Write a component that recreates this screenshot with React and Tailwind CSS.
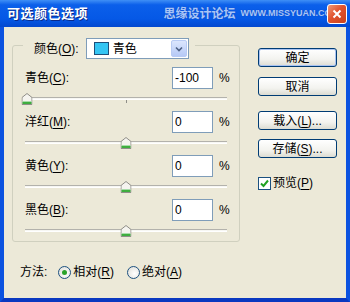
import React from 'react';

const channels = [
  { name: '青色', key: 'C', value: -100 },
  { name: '洋红', key: 'M', value: 0 },
  { name: '黄色', key: 'Y', value: 0 },
  { name: '黑色', key: 'B', value: 0 },
];

const U = ({ children }) => <span className="underline underline-offset-[2px]">{children}</span>;

const Thumb = () => (
  <svg width="11" height="12" viewBox="0 0 11 12">
    <path d="M0.5 11.5V4.5L5.5 0.5L10.5 4.5V11.5Z" fill="#f5f4ef" stroke="#8f8e88" />
    <rect x="1" y="9" width="9" height="2" fill="#3fae3f" />
    <rect x="1" y="8" width="9" height="1" fill="#a8dca8" />
  </svg>
);

const Slider = ({ value }) => {
  const pct = (value + 100) / 200;
  return (
    <div className="relative h-[18px] flex items-center">
      <div className="w-full h-[3px] border-t border-[#b3b2ac] bg-[#f7f7f3] border-b border-b-white" />
      <div className="absolute left-1/2 top-[11px] w-px h-[3px] bg-[#8f8e88]" />
      <div className="absolute inset-y-0 left-[2px] right-[2px]">
        <div
          className="absolute top-[4px] -translate-x-1/2"
          style={{ left: `${pct * 100}%` }}
        >
          <Thumb />
        </div>
      </div>
    </div>
  );
};

const XPButton = ({ children, primary, className = '' }) => (
  <button
    className={`w-[79px] h-[19px] rounded-[3px] border border-[#003c74] bg-[linear-gradient(to_bottom,#ffffff,#f3f3ef_60%,#dcdcd2)] text-[12px] leading-none text-black flex items-center justify-center ${
      primary ? 'shadow-[inset_0_0_0_1px_#a9c3f2]' : ''
    } ${className}`}
  >
    {children}
  </button>
);

const Radio = ({ checked }) => (
  <span className="w-[13px] h-[13px] rounded-full border border-[#1c5180] bg-[radial-gradient(circle_at_60%_60%,#ffffff,#dcdcd6)] flex items-center justify-center">
    {checked && <span className="w-[5px] h-[5px] rounded-full bg-[#2aa32a]" />}
  </span>
);

export default function App() {
  return (
    <div className="w-[350px] h-[302px] flex flex-col font-['Liberation_Sans','Noto_Sans_CJK_SC',sans-serif] text-[12px] text-black select-none">
      {/* title bar */}
      <div className="h-[27px] flex items-center bg-[linear-gradient(to_bottom,#3f8ff6,#0b5fea_18%,#0558e6_70%,#0348cf)]">
        <span className="pl-[7px] text-[13px] font-bold text-white tracking-[0.5px] [text-shadow:1px_1px_0_#0a2a8a]">
          可选颜色选项
        </span>
        <span className="ml-auto text-[12px] font-bold text-[#a8c6f7] [text-shadow:0_0_1px_#1a44b8]">
          思缘设计论坛
        </span>
        <span className="ml-[5px] text-[9px] font-bold text-[#a8c6f7] [text-shadow:0_0_1px_#1a44b8]">
          WWW.MISSYUAN.COM
        </span>
        <span className="relative -ml-[12px] mr-[3px] w-[20px] h-[20px] rounded-[3px] border border-white bg-[linear-gradient(135deg,#f09a78,#e1532e_45%,#c8411c)] flex items-center justify-center">
          <svg width="10" height="10" viewBox="0 0 10 10">
            <path d="M1.5 1.5L8.5 8.5M8.5 1.5L1.5 8.5" stroke="white" strokeWidth="2" />
          </svg>
        </span>
      </div>

      {/* body */}
      <div className="flex-1 flex bg-[#ece9d8] border-l-[4px] border-r-[4px] border-b-[4px] border-l-[#0b52e0] border-r-[#0b52e0] border-b-[#0a38c0]">
        {/* left column */}
        <div className="ml-[8px] mt-[18px] w-[228px] flex flex-col">
          <div className="border border-[#d0d0bf] rounded-[3px] flex flex-col pb-[2px]">
            <div className="-mt-[8px] ml-[10px] w-fit pl-[11px] pr-[6px] bg-[#ece9d8] flex items-center">
              <span>
                颜色(<U>O</U>):
              </span>
              <div className="ml-[7px] w-[103px] h-[21px] border border-[#7f9db9] bg-white flex items-center">
                <span className="ml-[7px] w-[15px] h-[13px] border border-[#1d4f7a] bg-[#34c5f3]" />
                <span className="ml-[4px] flex-1">青色</span>
                <span className="mr-[1px] w-[16px] h-[17px] rounded-[2px] border border-[#b8cbf4] bg-[linear-gradient(to_bottom,#dbe6fd,#b6c9f6)] flex items-center justify-center">
                  <svg width="8" height="6" viewBox="0 0 8 6">
                    <path d="M1 1.5L4 4.5L7 1.5" fill="none" stroke="#4d6185" strokeWidth="1.6" />
                  </svg>
                </span>
              </div>
            </div>

            <div className="mt-[8px] pl-[12px] pr-[6px] flex flex-col gap-[4px]">
              {channels.map((c) => (
                <div key={c.key} className="flex flex-col">
                  <div className="h-[22px] flex items-center">
                    <span className="flex-1">
                      {c.name}(<U>{c.key}</U>):
                    </span>
                    <div className="w-[41px] h-[22px] border border-[#7f9db9] bg-white flex items-center pl-[2px]">
                      {c.value}
                    </div>
                    <span className="ml-[6px] w-[14px]">%</span>
                  </div>
                  <div className="pr-[6px]">
                    <Slider value={c.value} />
                  </div>
                </div>
              ))}
            </div>
          </div>

          <div className="mt-[22px] h-[16px] flex items-center">
            <span className="ml-[8px]">方法:</span>
            <span className="ml-[11px]">
              <Radio checked />
            </span>
            <span className="ml-[2px]">
              相对(<U>R</U>)
            </span>
            <span className="ml-[13px]">
              <Radio />
            </span>
            <span className="ml-[2px]">
              绝对(<U>A</U>)
            </span>
          </div>
        </div>

        {/* right column */}
        <div className="ml-[18px] mt-[21px] w-[79px] flex flex-col">
          <XPButton primary>确定</XPButton>
          <XPButton className="mt-[10px]">取消</XPButton>
          <XPButton className="mt-[15px]">
            载入(<U>L</U>)...
          </XPButton>
          <XPButton className="mt-[9px]">
            存储(<U>S</U>)...
          </XPButton>
          <div className="mt-[16px] flex items-center">
            <span className="w-[13px] h-[13px] border border-[#1c5180] bg-white flex items-center justify-center">
              <svg width="9" height="9" viewBox="0 0 9 9">
                <path d="M1 4.5L3.5 7L8 1.5" fill="none" stroke="#21a121" strokeWidth="2" />
              </svg>
            </span>
            <span className="ml-[2px]">
              预览(<U>P</U>)
            </span>
          </div>
        </div>
      </div>
    </div>
  );
}
